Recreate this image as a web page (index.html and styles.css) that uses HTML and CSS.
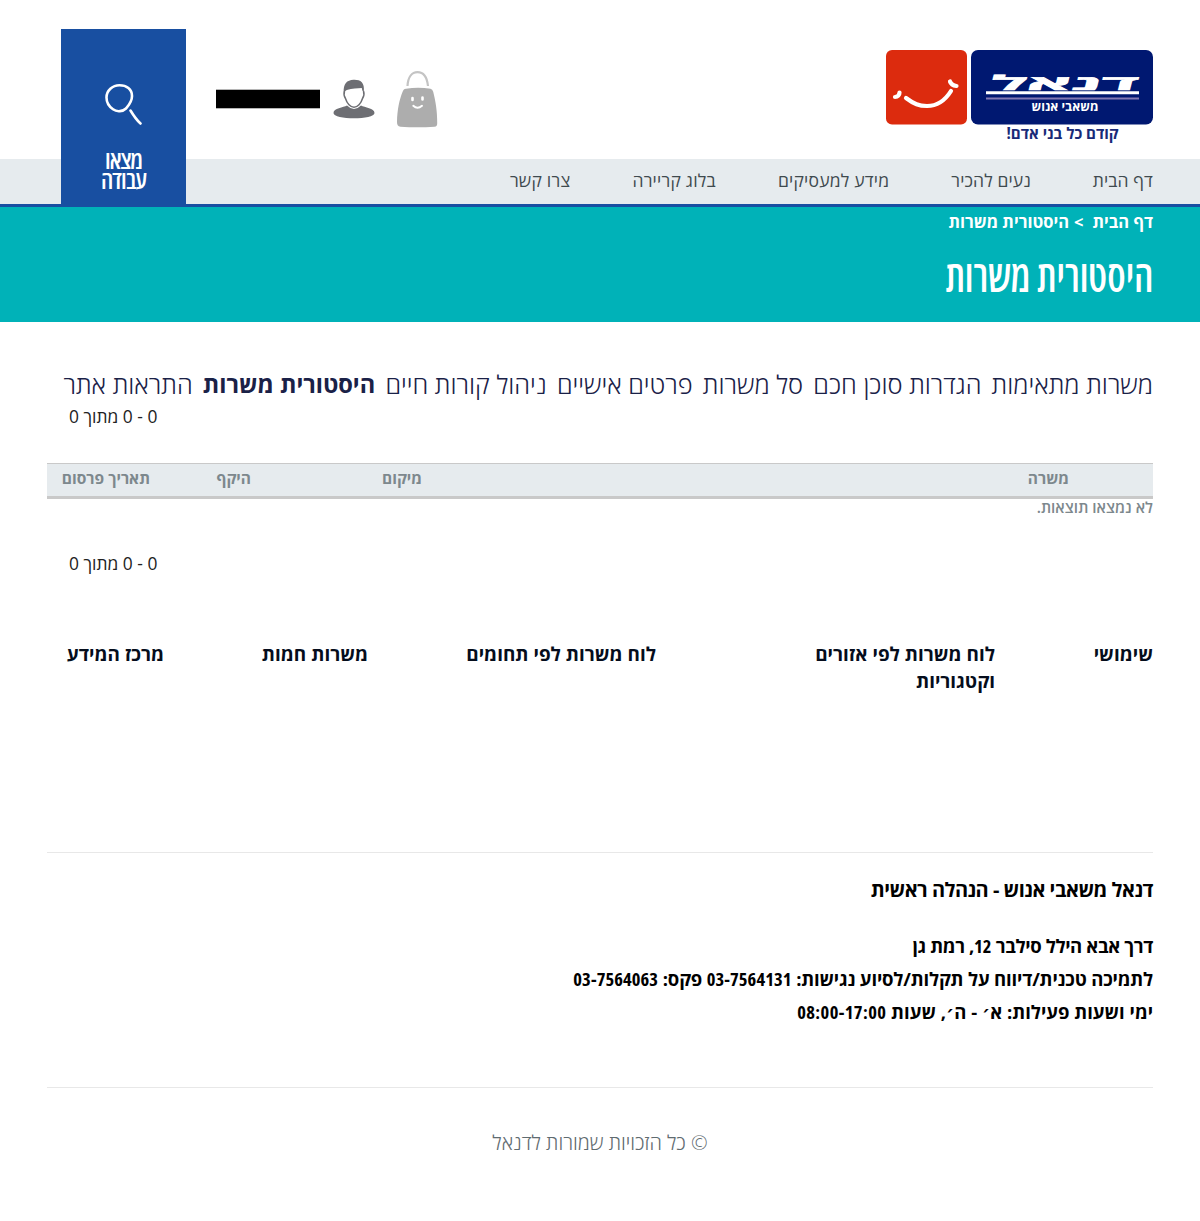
FILE: index.html
```html
<!DOCTYPE html>
<html lang="he" dir="rtl">
<head>
<meta charset="utf-8">
<title>היסטורית משרות</title>
<link rel="stylesheet" href="styles.css">
</head>
<body>
<header class="header">
  <div class="top">
    <svg class="logo" width="267" height="94" viewBox="0 0 267 94" direction="rtl">
      <rect width="81" height="74.500" rx="6" fill="#dc2b0e"/>
      <rect x="85" width="182" height="74.500" rx="7" fill="#001871"/>
      <g fill="none" stroke="#fff" stroke-linecap="round" stroke-width="4.200">
        <path d="M20 48C28 54 33 56 41 56 52 56 60 49 65 41"/>
        <path d="M9 47C12 47 13.500 45 13.500 42.500"/>
        <path d="M64 31.500C65 34.500 67.500 35.500 70.500 36"/>
      </g>
      <g class="logo-text">
        <text class="logo-name" x="251" y="39.800" textLength="148" lengthAdjust="spacingAndGlyphs" transform="translate(9.500 0) skewX(-14)">דנאל</text>
        <text class="logo-sub" x="212.500" y="61" textLength="67" lengthAdjust="spacingAndGlyphs">משאבי אנוש</text>
        <text class="logo-slogan" x="232.500" y="89" textLength="112" lengthAdjust="spacingAndGlyphs">קודם כל בני אדם!</text>
      </g>
      <path d="M100 42.700h153" stroke="#fff" stroke-width="3"/>
      <path d="M100 48.500h153" stroke="#8379b4" stroke-width="2"/>
    </svg>
    <div class="account">
      <svg class="bag" width="42" height="58" viewBox="0 0 42 58">
        <path d="M11.500 16C12 7 16 2.200 21.500 2.200S31 7 32 16" fill="none" stroke="#c4c4c4" stroke-width="2.200"/>
        <path d="M10 18.700q12-1.800 24.500 0 2 .3 2.700 3c2.300 9 4.100 19 4 31.500 0 2.300-.6 3.300-2.700 3.500q-17 1.300-34 0C1.800 56.300 1 54.500 1 52c.2-12 2.300-22 5.500-30 1-2.500 1.700-3.100 3.500-3.300z" fill="#adadad"/>
        <path d="M16.500 28v2M26.500 27.500v2" stroke="#fff" stroke-width="2.600" stroke-linecap="round"/>
        <path d="M17.300 35.800q4.200 3.800 8.700 0" fill="none" stroke="#fff" stroke-width="2" stroke-linecap="round"/>
      </svg>
      <svg class="user" width="42" height="40" viewBox="0 0 42 40">
        <path d="M14 26.500Q21 33.500 28 26.500c3.500 2 13.500 2.500 13.500 7.500 0 3.500-10 5.300-20.500 5.300S.5 37.500.5 34c0-5 10-5.500 13.500-7.500z" fill="#6d6e73"/>
        <path d="M11.500 12c-1 3 0 6 1 7.500 1.500 5 5 8.700 8.500 8.700s7-3.700 8.500-8.700c1-1.500 2-4.500 1-7.500" fill="none" stroke="#6d6e73" stroke-width="1.500"/>
        <path d="M10.800 13.500C10 5 14 1 20.500 .8 27 .5 32 3 30.800 13l-1.500-1.500-.5-2.500c-4.500.3-9.500.5-15 2l-1.500 1z" fill="#6d6e73"/>
      </svg>
      <div class="username"></div>
    </div>
  </div>
  <nav class="nav">
    <a>דף הבית</a><a>נעים להכיר</a><a>מידע למעסיקים</a><a>בלוג קריירה</a><a>צרו קשר</a>
  </nav>
  <a class="search">
    <svg width="40" height="42" viewBox="0 0 40 42" fill="none" stroke="#fff" stroke-width="2.600" stroke-linecap="round">
      <path d="M15.500 2.300C22.500 2.300 28 6 28 13c0 6-3.500 9.500-6 12.500-3 3-9 3.800-13 .8C5 23.500 2.500 19.500 2.500 14.500 2.500 7.500 8.500 2.300 15.500 2.300z"/>
      <path d="M26.500 27.500c3 5 5.500 9 10 13"/>
    </svg>
    <span>מצאו<br>עבודה</span>
  </a>
</header>

<section class="band">
  <div class="crumbs"><span>דף הבית</span><span>&gt;</span><span>היסטורית משרות</span></div>
  <h1 class="title">היסטורית משרות</h1>
</section>

<main class="main">
  <div class="tabs">
    <a>משרות מתאימות</a><a>הגדרות סוכן חכם</a><a>סל משרות</a><a>פרטים אישיים</a><a>ניהול קורות חיים</a><a class="active">היסטורית משרות</a><a>התראות אתר</a>
  </div>
  <div class="pager">0 - 0 מתוך 0</div>
  <div class="thead"><span>משרה</span><span>מיקום</span><span>היקף</span><span>תאריך פרסום</span></div>
  <div class="empty">לא נמצאו תוצאות.</div>
  <div class="pager pager-bottom">0 - 0 מתוך 0</div>
</main>

<footer class="footer">
  <div class="links">
    <h3>שימושי</h3><h3>לוח משרות לפי אזורים<br>וקטגוריות</h3><h3>לוח משרות לפי תחומים</h3><h3>משרות חמות</h3><h3>מרכז המידע</h3>
  </div>
  <div class="address">
    <h4>דנאל משאבי אנוש - הנהלה ראשית</h4>
    <p class="street">דרך אבא הילל סילבר <span class="num">12</span>, רמת גן</p>
    <p class="support">לתמיכה טכנית/דיווח על תקלות/לסיוע נגישות: <span class="num">03-7564131</span> פקס: <span class="num">03-7564063</span></p>
    <p class="hours">ימי ושעות פעילות: א׳ - ה׳, שעות <span class="num">08:00-17:00</span></p>
  </div>
  <div class="copyright">© כל הזכויות שמורות לדנאל</div>
</footer>
</body>
</html>
```
FILE: styles.css
```css
* { box-sizing: border-box; }
body { margin: 0; background: #fff; font-family: "Open Sans", "DejaVu Sans", sans-serif; white-space: nowrap; color: #000; }
h1, h3, h4, p { margin: 0; font-weight: 700; }

.header { position: relative; }
.top { height: 159px; padding: 50px 47px 0 216px; display: flex; justify-content: space-between; align-items: flex-start; }
.logo { display: block; }
.logo-text { font-family: "Open Sans", sans-serif; font-weight: 700; }
.logo-name { font-size: 20px; font-weight: 700; fill: #fff; stroke: #fff; stroke-width: .6px; }
.logo-sub { font-size: 12.5px; fill: #fff; }
.logo-slogan { font-size: 16px; fill: #182a78; }
.account { display: flex; align-items: flex-start; padding-top: 20px; }
.user { margin: 9px 21px 0 13px; }
.username { width: 104px; height: 20px; margin-top: 19px; background: #000; border: solid #b5b5b5; border-width: 1px 0 1px 0; }

.nav { height: 48px; padding: 0 47px 3px; display: flex; align-items: center; gap: 62px; background: #e6ebee; border-bottom: 3px solid #184fa1; font-size: 17.500px; font-weight: 500; letter-spacing: .1px; color: #3f4a4e; }
.nav a:nth-child(n+3) { letter-spacing: .22px; }
.search { position: absolute; left: 61px; top: 29px; width: 125px; height: 178px; padding-top: 54px; background: #184fa1; color: #fff; display: flex; flex-direction: column; align-items: center; gap: 25px; font-size: 25px; line-height: 19.5px; font-stretch: 75%; font-weight: 600; letter-spacing: -.9px; text-align: center; }

.band { height: 115px; padding: 0 47px; background: #00b2b8; color: #fff; }
.crumbs { display: flex; gap: 5px; font-size: 16.500px; line-height: 29px; font-weight: 700; }
.crumbs span:first-child { margin-left: 4px; }
.title { width: fit-content; margin-top: 9px; font-size: 45px; line-height: 60px; font-weight: 600; font-stretch: 75%; transform: scaleX(.864); transform-origin: right; }

.main { padding: 47px 47px 0; }
.tabs { display: flex; gap: 10.200px; font-size: 25.400px; line-height: 30px; font-weight: 300; color: #1a2147; }
.tabs .active { font-weight: 700; font-size: 23.600px; }
.pager { margin-top: 5px; padding-left: 22px; text-align: left; font-size: 17.400px; line-height: 24px; font-weight: 500; color: #222; }
.pager-bottom { margin-top: 35px; }
.thead { display: grid; grid-template-columns: 731px 171px 101px 1fr; margin-top: 35px; padding-bottom: 3px; border-top: 1px solid #c9c9c9; border-bottom: 3px solid #c9c9c9; background: #e6ebee; font-size: 15.500px; line-height: 29px; font-weight: 700; color: #7d888d; }
.thead span:first-child { padding-right: 84px; }
.empty { font-size: 15.300px; line-height: 17px; font-weight: 600; color: #7d888d; }

.footer { padding: 66px 47px 0; }
.links { display: grid; grid-template-columns: 158px 339px 288px 204px 1fr; height: 212px; border-bottom: 1px solid #e8e8e8; }
.links h3 { font-size: 18.900px; line-height: 27px; color: #050d1c; }
.address { height: 235px; padding-top: 22px; border-bottom: 1px solid #e8e8e8; font-size: 18.500px; line-height: 33px; }
.address h4 { margin-bottom: 24px; font-size: 20px; line-height: 30px; letter-spacing: -.5px; }
.num { font-stretch: 75%; letter-spacing: 0; }
.street { letter-spacing: -.37px; }
.support { letter-spacing: -.17px; }
.support .num { letter-spacing: .1px; }
.hours { letter-spacing: 0; }
.hours .num { letter-spacing: .4px; }
.copyright { margin-top: 40px; text-align: center; font-size: 20px; line-height: 30px; font-weight: 300; color: #5f6b70; }
```
